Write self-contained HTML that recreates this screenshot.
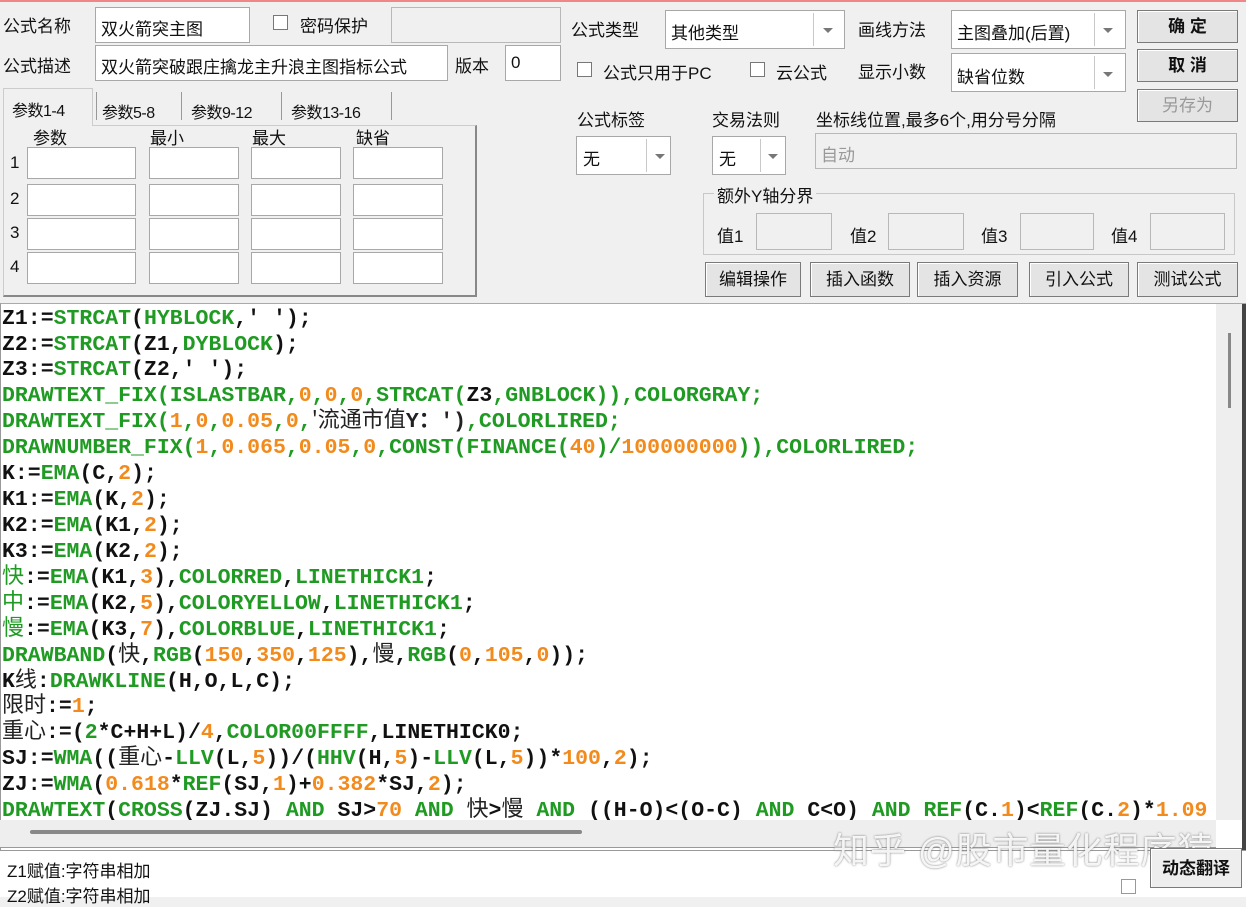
<!DOCTYPE html>
<html><head><meta charset="utf-8"><style>
*{margin:0;padding:0;box-sizing:border-box}
body{width:1246px;height:897px;background:#f0f0f0;position:relative;overflow:hidden;font-family:"Liberation Sans","Noto Sans CJK SC",sans-serif;font-size:17px;color:#111}
.a{position:absolute;white-space:nowrap}
.in{position:absolute;background:#fff;border:1px solid #a8a8a8}
.dis{position:absolute;background:#f0f0f0;border:1px solid #b8b8b8}
.btn{position:absolute;background:#e4e4e4;border:1px solid #7a7a7a;box-shadow:inset 1px 1px 0 #fff;text-align:center;font-size:17px}
.dd{position:absolute;width:1px;background:#c8c8c8;top:2px;bottom:2px}
.arr{position:absolute;width:0;height:0;border-left:5px solid transparent;border-right:5px solid transparent;border-top:5px solid #777}
.cb{position:absolute;width:15px;height:15px;background:#fff;border:1px solid #777}
#code{position:absolute;left:2px;top:306px;width:1214px;height:514px;overflow:hidden;font-family:"Liberation Mono",monospace;font-weight:bold;font-size:21.5px;color:#111}
#code div{position:absolute;left:0;white-space:pre;height:26px;line-height:26px}
.g{color:#1f9a22}.o{color:#f28a1c}
.c,.cg{font-family:"Noto Sans CJK SC",sans-serif;font-weight:normal;font-size:22px;line-height:0;color:#222}
.cg{color:#1f9a22}
.tab{font-size:16px;letter-spacing:-0.5px}
</style></head><body>
<div class="a" style="left:0;top:0;width:1246px;height:2px;background:#e88"></div>
<div class="a" style="left:3px;top:12px">公式名称</div>
<div class="in" style="left:95px;top:7px;width:155px;height:36px"><span class="a" style="left:5px;top:7px">双火箭突主图</span></div>
<div class="cb" style="left:273px;top:15px"></div>
<div class="a" style="left:300px;top:12px">密码保护</div>
<div class="dis" style="left:391px;top:7px;width:170px;height:36px"></div>
<div class="a" style="left:3px;top:52px">公式描述</div>
<div class="in" style="left:95px;top:45px;width:353px;height:36px;overflow:hidden"><span class="a" style="left:5px;top:7px">双火箭突破跟庄擒龙主升浪主图指标公式</span></div>
<div class="a" style="left:455px;top:52px">版本</div>
<div class="in" style="left:505px;top:45px;width:56px;height:36px"><span class="a" style="left:5px;top:7px">0</span></div>
<div class="a" style="left:3px;top:88px;width:90px;height:38px;background:#f0f0f0;border:1px solid #ccc;border-bottom:none;z-index:2"></div>
<div class="a tab" style="left:12px;top:97px;z-index:3">参数1-4</div>
<div class="a tab" style="left:102px;top:99px">参数5-8</div>
<div class="a" style="left:96px;top:92px;width:1px;height:28px;background:#999"></div>
<div class="a" style="left:181px;top:92px;width:1px;height:28px;background:#999"></div>
<div class="a tab" style="left:191px;top:99px">参数9-12</div>
<div class="a" style="left:281px;top:92px;width:1px;height:28px;background:#999"></div>
<div class="a tab" style="left:291px;top:99px">参数13-16</div>
<div class="a" style="left:391px;top:92px;width:1px;height:28px;background:#999"></div>
<div class="a" style="left:3px;top:125px;width:474px;height:172px;border:1px solid #ccc;border-right:2px solid #888;border-bottom:2px solid #888"></div>
<div class="a" style="left:33px;top:124px">参数</div>
<div class="a" style="left:150px;top:124px">最小</div>
<div class="a" style="left:252px;top:124px">最大</div>
<div class="a" style="left:356px;top:124px">缺省</div>
<div class="a" style="left:10px;top:153px">1</div><div class="a" style="left:10px;top:189px">2</div><div class="a" style="left:10px;top:223px">3</div><div class="a" style="left:10px;top:257px">4</div>
<div class="in" style="left:27px;top:147px;width:109px;height:32px"></div><div class="in" style="left:149px;top:147px;width:90px;height:32px"></div><div class="in" style="left:251px;top:147px;width:90px;height:32px"></div><div class="in" style="left:353px;top:147px;width:90px;height:32px"></div>
<div class="in" style="left:27px;top:184px;width:109px;height:32px"></div><div class="in" style="left:149px;top:184px;width:90px;height:32px"></div><div class="in" style="left:251px;top:184px;width:90px;height:32px"></div><div class="in" style="left:353px;top:184px;width:90px;height:32px"></div>
<div class="in" style="left:27px;top:218px;width:109px;height:32px"></div><div class="in" style="left:149px;top:218px;width:90px;height:32px"></div><div class="in" style="left:251px;top:218px;width:90px;height:32px"></div><div class="in" style="left:353px;top:218px;width:90px;height:32px"></div>
<div class="in" style="left:27px;top:252px;width:109px;height:32px"></div><div class="in" style="left:149px;top:252px;width:90px;height:32px"></div><div class="in" style="left:251px;top:252px;width:90px;height:32px"></div><div class="in" style="left:353px;top:252px;width:90px;height:32px"></div>
<div class="a" style="left:571px;top:16px">公式类型</div>
<div class="in" style="left:665px;top:10px;width:180px;height:39px"><span class="a" style="left:5px;top:8px">其他类型</span><div class="dd" style="left:147px"></div><div class="arr" style="left:157px;top:17px"></div></div>
<div class="a" style="left:858px;top:16px">画线方法</div>
<div class="in" style="left:951px;top:10px;width:175px;height:39px"><span class="a" style="left:5px;top:8px">主图叠加(后置)</span><div class="dd" style="left:142px"></div><div class="arr" style="left:151px;top:17px"></div></div>
<div class="btn" style="left:1137px;top:10px;width:101px;height:33px;line-height:31px;font-weight:bold">确 定</div>
<div class="btn" style="left:1137px;top:49px;width:101px;height:33px;line-height:31px;font-weight:bold">取 消</div>
<div class="btn" style="left:1137px;top:89px;width:101px;height:33px;line-height:31px;color:#999">另存为</div>
<div class="cb" style="left:577px;top:62px"></div>
<div class="a" style="left:603px;top:59px">公式只用于PC</div>
<div class="cb" style="left:750px;top:62px"></div>
<div class="a" style="left:776px;top:59px">云公式</div>
<div class="a" style="left:858px;top:58px">显示小数</div>
<div class="in" style="left:951px;top:53px;width:175px;height:39px"><span class="a" style="left:5px;top:9px">缺省位数</span><div class="dd" style="left:142px"></div><div class="arr" style="left:151px;top:18px"></div></div>
<div class="a" style="left:577px;top:106px">公式标签</div>
<div class="a" style="left:712px;top:106px">交易法则</div>
<div class="a" style="left:816px;top:106px">坐标线位置,最多6个,用分号分隔</div>
<div class="in" style="left:576px;top:136px;width:95px;height:39px"><span class="a" style="left:6px;top:8px">无</span><div class="dd" style="left:69px"></div><div class="arr" style="left:78px;top:17px"></div></div>
<div class="in" style="left:712px;top:136px;width:74px;height:39px"><span class="a" style="left:6px;top:8px">无</span><div class="dd" style="left:47px"></div><div class="arr" style="left:55px;top:17px"></div></div>
<div class="dis" style="left:815px;top:133px;width:422px;height:36px"><span class="a" style="left:5px;top:7px;color:#999">自动</span></div>
<div class="a" style="left:703px;top:193px;width:532px;height:62px;border:1px solid #c8c8c8"></div>
<div class="a" style="left:714px;top:182px;background:#f0f0f0;padding:0 3px">额外Y轴分界</div>
<div class="a" style="left:717px;top:222px">值1</div><div class="dis" style="left:756px;top:213px;width:76px;height:37px"></div>
<div class="a" style="left:850px;top:222px">值2</div><div class="dis" style="left:888px;top:213px;width:76px;height:37px"></div>
<div class="a" style="left:981px;top:222px">值3</div><div class="dis" style="left:1020px;top:213px;width:74px;height:37px"></div>
<div class="a" style="left:1111px;top:222px">值4</div><div class="dis" style="left:1150px;top:213px;width:75px;height:37px"></div>
<div class="btn" style="left:705px;top:262px;width:96px;height:35px;line-height:33px">编辑操作</div>
<div class="btn" style="left:810px;top:262px;width:100px;height:35px;line-height:33px">插入函数</div>
<div class="btn" style="left:917px;top:262px;width:101px;height:35px;line-height:33px">插入资源</div>
<div class="btn" style="left:1029px;top:262px;width:100px;height:35px;line-height:33px">引入公式</div>
<div class="btn" style="left:1137px;top:262px;width:101px;height:35px;line-height:33px">测试公式</div>
<div class="a" style="left:0;top:303px;width:1246px;height:547px;background:#fff;border-top:1px solid #aaa;border-left:1px solid #999"></div>
<div class="a" style="left:1216px;top:304px;width:26px;height:516px;background:#eee"></div>
<div class="a" style="left:1228px;top:333px;width:3px;height:75px;background:#888"></div>
<div class="a" style="left:1242px;top:304px;width:4px;height:550px;background:#444"></div>
<div class="a" style="left:0;top:820px;width:1216px;height:28px;background:#eee;border-bottom:1px solid #999"></div>
<div class="a" style="left:30px;top:830px;width:552px;height:4px;background:#888;border-radius:2px"></div>
<div id="code">
<div style="top:0">Z1:=<span class="g">STRCAT</span>(<span class="g">HYBLOCK</span>,' ');</div>
<div style="top:26px">Z2:=<span class="g">STRCAT</span>(Z1,<span class="g">DYBLOCK</span>);</div>
<div style="top:51px">Z3:=<span class="g">STRCAT</span>(Z2,' ');</div>
<div class="g" style="top:77px">DRAWTEXT_FIX(ISLASTBAR,<span class="o">0</span>,<span class="o">0</span>,<span class="o">0</span>,STRCAT(<span style="color:#111">Z3</span>,GNBLOCK)),COLORGRAY;</div>
<div class="g" style="top:103px">DRAWTEXT_FIX(<span class="o">1</span>,<span class="o">0</span>,<span class="o">0.05</span>,<span class="o">0</span>,<span class="c">'流通市值</span><span style="color:#222">Y：')</span>,COLORLIRED;</div>
<div class="g" style="top:129px">DRAWNUMBER_FIX(<span class="o">1</span>,<span class="o">0.065</span>,<span class="o">0.05</span>,<span class="o">0</span>,CONST(FINANCE(<span class="o">40</span>)/<span class="o">100000000</span>)),COLORLIRED;</div>
<div style="top:155px">K:=<span class="g">EMA</span>(C,<span class="o">2</span>);</div>
<div style="top:181px">K1:=<span class="g">EMA</span>(K,<span class="o">2</span>);</div>
<div style="top:207px">K2:=<span class="g">EMA</span>(K1,<span class="o">2</span>);</div>
<div style="top:233px">K3:=<span class="g">EMA</span>(K2,<span class="o">2</span>);</div>
<div style="top:259px"><span class="cg">快</span>:=<span class="g">EMA</span>(K1,<span class="o">3</span>),<span class="g">COLORRED</span>,<span class="g">LINETHICK1</span>;</div>
<div style="top:285px"><span class="cg">中</span>:=<span class="g">EMA</span>(K2,<span class="o">5</span>),<span class="g">COLORYELLOW</span>,<span class="g">LINETHICK1</span>;</div>
<div style="top:311px"><span class="cg">慢</span>:=<span class="g">EMA</span>(K3,<span class="o">7</span>),<span class="g">COLORBLUE</span>,<span class="g">LINETHICK1</span>;</div>
<div style="top:337px"><span class="g">DRAWBAND</span>(<span class="c">快</span>,<span class="g">RGB</span>(<span class="o">150</span>,<span class="o">350</span>,<span class="o">125</span>),<span class="c">慢</span>,<span class="g">RGB</span>(<span class="o">0</span>,<span class="o">105</span>,<span class="o">0</span>));</div>
<div style="top:363px">K<span class="c">线</span>:<span class="g">DRAWKLINE</span>(H,O,L,C);</div>
<div style="top:388px"><span class="c">限时</span>:=<span class="o">1</span>;</div>
<div style="top:414px"><span class="c">重心</span>:=(<span class="g">2</span>*C+H+L)/<span class="o">4</span>,<span class="g">COLOR00FFFF</span>,LINETHICK0;</div>
<div style="top:440px">SJ:=<span class="g">WMA</span>((<span class="c">重心</span>-<span class="g">LLV</span>(L,<span class="o">5</span>))/(<span class="g">HHV</span>(H,<span class="o">5</span>)-<span class="g">LLV</span>(L,<span class="o">5</span>))*<span class="o">100</span>,<span class="o">2</span>);</div>
<div style="top:466px">ZJ:=<span class="g">WMA</span>(<span class="o">0.618</span>*<span class="g">REF</span>(SJ,<span class="o">1</span>)+<span class="o">0.382</span>*SJ,<span class="o">2</span>);</div>
<div style="top:492px"><span class="g">DRAWTEXT</span>(<span class="g">CROSS</span>(ZJ.SJ) <span class="g">AND</span> SJ&gt;<span class="o">70</span> <span class="g">AND</span> <span class="c">快</span>&gt;<span class="c">慢</span> <span class="g">AND</span> ((H-O)&lt;(O-C) <span class="g">AND</span> C&lt;O) <span class="g">AND</span> <span class="g">REF</span>(C.<span class="o">1</span>)&lt;<span class="g">REF</span>(C.<span class="o">2</span>)*<span class="o">1.09</span></div>
</div>
<div class="a" style="left:0;top:850px;width:1246px;height:47px;background:#fff;border-top:1px solid #999"></div>
<div class="a" style="left:7px;top:857px;font-size:17px">Z1赋值:字符串相加</div>
<div class="a" style="left:7px;top:882px;font-size:17px">Z2赋值:字符串相加</div>
<div class="a" style="left:833px;top:822px;font-size:36px;color:rgba(255,255,255,0.9);text-shadow:0 0 2px #777;letter-spacing:1px">知乎 @股市量化程序猿</div>
<div class="btn" style="left:1150px;top:848px;width:92px;height:40px;line-height:40px;font-weight:bold;background:#eee">动态翻译</div>
<div class="cb" style="left:1121px;top:879px;border-color:#999"></div>
</body></html>
